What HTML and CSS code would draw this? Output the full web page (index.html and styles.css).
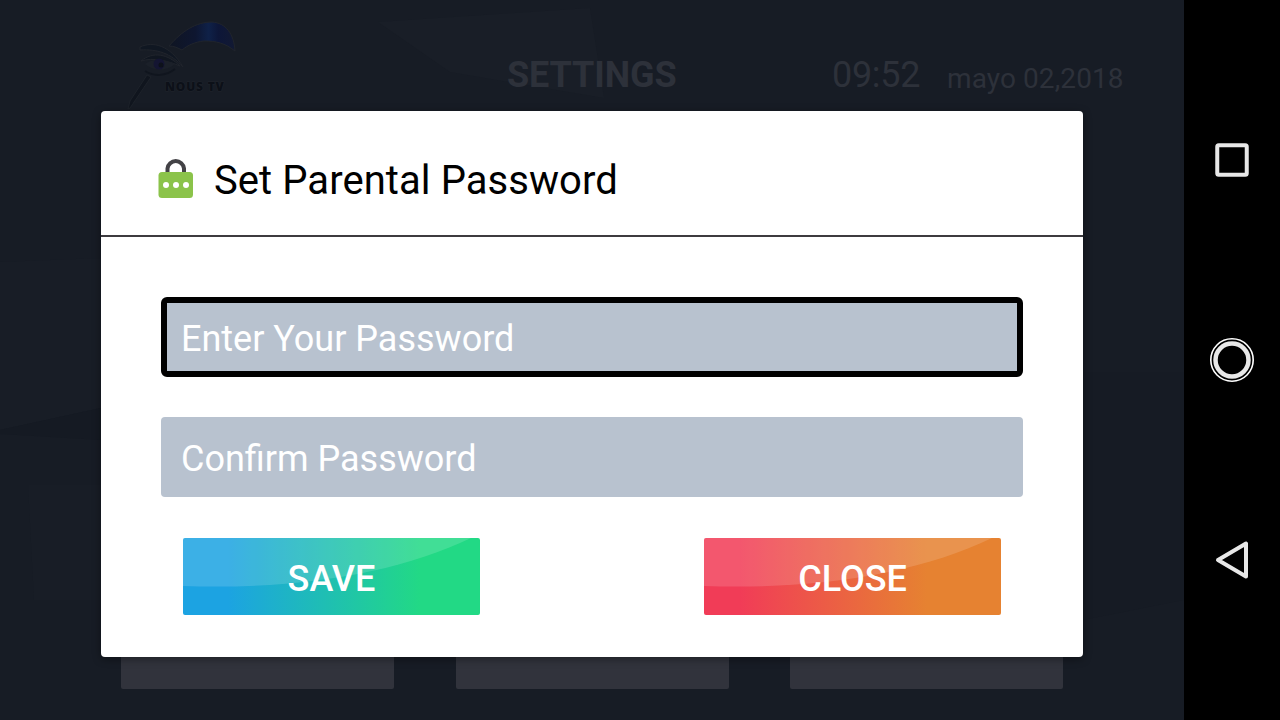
FILE: index.html
```html
<!DOCTYPE html>
<html lang="en">
<head>
    <meta charset="UTF-8">
    <meta name="viewport" content="width=device-width, initial-scale=1.0">
    <title>Settings</title>
    <link rel="stylesheet" href="styles.css">
</head>
<body>
    <main class="app">
        <svg class="backdrop" viewBox="0 0 1184 720">
            <path d="M378 22L590 8L604 98L450 72Z" fill="#191e27"/>
            <path d="M0 262L101 258V408L0 430Z" fill="#181d26"/>
            <path d="M0 430L101 408V440L0 434Z" fill="#151a23"/>
            <path d="M28 485H101V600H34Z" fill="#181d26"/>
            <path d="M1083 372H1184V600L1083 620Z" fill="#161b24"/>
        </svg>

        <header class="topbar">
            <svg class="logo" viewBox="120 11 120 100">
                <defs>
                    <linearGradient id="wing" x1="0" x2="1">
                        <stop offset="0" stop-color="#0f1522"/>
                        <stop offset="0.4" stop-color="#0e1630"/>
                        <stop offset="0.6" stop-color="#0f2148"/>
                        <stop offset="0.75" stop-color="#0d1638"/>
                        <stop offset="1" stop-color="#121932"/>
                    </linearGradient>
                </defs>
                <path d="M169 46C182 31 196 22 212 22C226 23 234 34 235 51C225 43 216 41 204 41C195 42 188 45 182 50C178 48 174 46 169 46Z" fill="url(#wing)" stroke="#20242c"/>
                <path d="M140 47C153 41 170 45 183 67C171 53 157 49 140 50Z" fill="#101722" stroke="#20242c"/>
                <path d="M141 61C153 51 168 54 180 66C168 61 153 57 141 61Z" fill="#101620" stroke="#20242c"/>
                <path d="M145 64C155 57 165 60 175 64C166 72 153 71 145 64Z" fill="#1b2029"/>
                <circle cx="159" cy="64" r="5.500" fill="#141532"/>
                <circle cx="161" cy="65" r="2.500" fill="#0d111a"/>
                <path d="M145 71C154 77 166 76 175 69" fill="none" stroke="#10151e" stroke-width="2"/>
                <path d="M147 75L151 77L130 108L128 109L130 101Z" fill="#10151e" stroke="#20242c" stroke-width="0.8"/>
                <text class="logo-text" x="165" y="91">NOUS TV</text>
            </svg>
            <h1>SETTINGS</h1>
            <span class="time">09:52</span>
            <span class="date">mayo 02,2018</span>
        </header>

        <div class="tiles">
            <div class="tile"></div>
            <div class="tile"></div>
            <div class="tile"></div>
        </div>

        <form class="dialog">
            <div class="dialog-header">
                <svg class="lock" viewBox="0 0 36 42">
                    <path d="M9.500 16V11.500A8.300 8.300 0 0 1 26 11.500V16" fill="none" stroke="#434246" stroke-width="4"/>
                    <rect x="0.500" y="15" width="34.500" height="26" rx="3.500" fill="#8bc34a"/>
                    <circle cx="8" cy="28" r="3" fill="#fff"/>
                    <circle cx="18" cy="28" r="3" fill="#fff"/>
                    <circle cx="28" cy="28" r="3" fill="#fff"/>
                </svg>
                <h2>Set Parental Password</h2>
            </div>
            <div class="dialog-body">
                <input type="password" class="field focused" placeholder="Enter Your Password">
                <input type="password" class="field" placeholder="Confirm Password">
                <div class="actions">
                    <button type="button" class="btn btn-save">
                        <svg class="gloss" viewBox="0 0 297 77" preserveAspectRatio="none"><path d="M0 0H288C215 35 115 52 0 48Z" fill="#fff" fill-opacity="0.14"/></svg>
                        <span>SAVE</span>
                    </button>
                    <button type="button" class="btn btn-close">
                        <svg class="gloss" viewBox="0 0 297 77" preserveAspectRatio="none"><path d="M0 0H288C215 35 115 52 0 48Z" fill="#fff" fill-opacity="0.14"/></svg>
                        <span>CLOSE</span>
                    </button>
                </div>
            </div>
        </form>
    </main>

    <nav class="navbar">
        <svg viewBox="0 0 48 48">
            <rect x="9.250" y="9.250" width="29.500" height="29.500" rx="1.500" fill="none" stroke="#e8e8e8" stroke-width="4"/>
        </svg>
        <svg viewBox="0 0 48 48">
            <circle cx="24" cy="24" r="21.200" fill="none" stroke="#fff" stroke-width="1.600"/>
            <circle cx="24" cy="24" r="16.500" fill="none" stroke="#e8e8e8" stroke-width="4.500"/>
        </svg>
        <svg viewBox="0 0 48 48">
            <path d="M38 7.500V40.500L10 24Z" fill="none" stroke="#e8e8e8" stroke-width="4" stroke-linejoin="round"/>
        </svg>
    </nav>
</body>
</html>
```

FILE: styles.css
```css
* {
    margin: 0;
    padding: 0;
    box-sizing: border-box;
}

body {
    font-family: Roboto, sans-serif;
    background-color: #000;
    display: flex;
    width: 1280px;
    height: 720px;
    overflow: hidden;
}

.app {
    position: relative;
    width: 1184px;
    height: 720px;
    background-color: #171c25;
    display: flex;
    flex-direction: column;
    justify-content: space-between;
}

.backdrop {
    position: absolute;
    top: 0;
    left: 0;
    width: 100%;
    height: 100%;
}

.topbar {
    position: relative;
    display: grid;
    grid-template-columns: 387px 325px 115px 1fr;
    align-items: baseline;
    padding: 11px 0 0 120px;
    height: 111px;
    color: #2d313a;
    white-space: nowrap;
}

.logo {
    width: 120px;
    height: 100px;
    align-self: start;
}

.logo-text {
    font-family: "Open Sans", sans-serif;
    font-size: 12px;
    font-weight: 800;
    letter-spacing: 0.8px;
    fill: #0c1018;
    stroke: #20242c;
    stroke-width: 1px;
    paint-order: stroke;
}

.topbar h1 {
    font-size: 36px;
    font-weight: 700;
    line-height: 42px;
    padding-top: 43px;
    letter-spacing: -0.1px;
}

.time {
    font-size: 36px;
    letter-spacing: -0.3px;
}

.date {
    font-size: 28px;
    letter-spacing: 0.1px;
    padding-top: 1px;
    transform: translateY(1px);
}

.tiles {
    position: relative;
    display: grid;
    grid-template-columns: repeat(3, 273px);
    justify-content: space-between;
    padding: 0 121px 31px;
}

.tile {
    height: 120px;
    background-color: #31333c;
    border-radius: 2px;
}

/* Password dialog */
.dialog {
    position: absolute;
    top: 111px;
    left: 101px;
    width: 982px;
    height: 546px;
    background-color: #fff;
    border-radius: 4px;
    box-shadow: 0 2px 8px rgba(0, 0, 0, 0.4);
}

.dialog-header {
    display: flex;
    align-items: center;
    gap: 20px;
    height: 126px;
    padding: 14px 57px 0;
    border-bottom: 2px solid #3d3b3f;
}

.lock {
    width: 36px;
    height: 42px;
    margin-bottom: 5px;
}

.dialog-header h2 {
    font-size: 40px;
    font-weight: 400;
    letter-spacing: 0.07px;
    color: #000;
}

.dialog-body {
    display: flex;
    flex-direction: column;
    gap: 40px;
    padding: 60px;
}

.field {
    width: 100%;
    height: 80px;
    padding: 3px 20px 0;
    border: none;
    border-radius: 4px;
    background-color: #b8c2cf;
    font-family: inherit;
    font-size: 36px;
    outline: none;
}

.field::placeholder {
    color: #fff;
    opacity: 1;
}

.focused {
    border: 6px solid #000;
    border-radius: 6px;
    padding: 3px 14px 0;
}

.actions {
    display: flex;
    justify-content: space-between;
    padding: 1px 22px 0;
}

.btn {
    position: relative;
    width: 297px;
    height: 77px;
    padding-top: 5px;
    border: none;
    border-radius: 2px;
    overflow: hidden;
    color: #fff;
    font-family: inherit;
    font-size: 36px;
    font-weight: 500;
}

.btn span {
    position: relative;
}

.btn-save {
    background: linear-gradient(to right, #1ca3e2 15%, #22d985 80%);
}

.btn-close {
    background: linear-gradient(to right, #f13c57 12%, #e68231 75%);
}

.gloss {
    position: absolute;
    top: 0;
    left: 0;
    width: 100%;
    height: 100%;
}

/* Phone navigation */
.navbar {
    display: flex;
    flex-direction: column;
    align-items: center;
    justify-content: center;
    gap: 152px;
    width: 96px;
}

.navbar svg {
    width: 48px;
    height: 48px;
}
```
